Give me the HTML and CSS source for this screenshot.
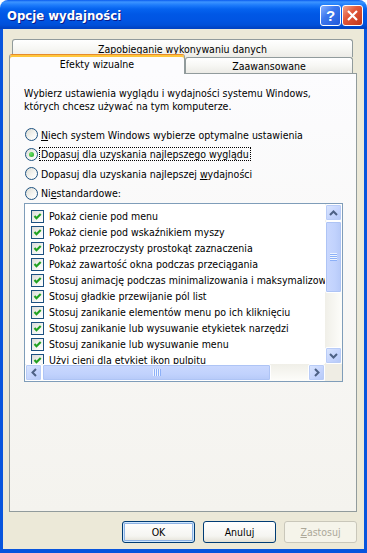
FILE: index.html
```html
<!DOCTYPE html>
<html lang="pl">
<head>
    <meta charset="UTF-8">
    <title>Opcje wydajności</title>
    <link rel="stylesheet" href="styles.css">
</head>
<body>
    <div class="window">
        <div class="titlebar">
            <span class="title">Opcje wydajności</span>
            <div class="title-buttons">
                <div class="tbtn help">?</div>
                <div class="tbtn close">
                    <svg width="11" height="11" viewBox="0 0 11 11"><path d="M1 1 L10 10 M10 1 L1 10" stroke="#fff" stroke-width="2.2" fill="none"/></svg>
                </div>
            </div>
        </div>
        <div class="frame">
            <div class="client">
                <div class="tab-row row-back">
                    <div class="tab tab-wide">Zapobieganie wykonywaniu danych</div>
                </div>
                <div class="tab-row row-front">
                    <div class="tab active">Efekty wizualne</div>
                    <div class="tab tab-adv">Zaawansowane</div>
                </div>

                <div class="panel">
                    <p class="intro">Wybierz ustawienia wyglądu i wydajności systemu Windows,<br>których chcesz używać na tym komputerze.</p>

                    <div class="options">
                        <div class="radio"><span class="rb"></span><span class="rlabel"><u>N</u>iech system Windows wybierze optymalne ustawienia</span></div>
                        <div class="radio"><span class="rb checked"></span><span class="rlabel focused">Dopasuj dla uzyskania najlepszego wyglądu</span></div>
                        <div class="radio"><span class="rb"></span><span class="rlabel">Dopasuj dla uzyskania najlepszej <u>w</u>ydajności</span></div>
                        <div class="radio"><span class="rb"></span><span class="rlabel">Ni<u>e</u>standardowe:</span></div>
                    </div>

                    <div class="listbox">
                        <div class="items">
                            <div class="item"><span class="cb"></span>Pokaż cienie pod menu</div>
                            <div class="item"><span class="cb"></span>Pokaż cienie pod wskaźnikiem myszy</div>
                            <div class="item"><span class="cb"></span>Pokaż przezroczysty prostokąt zaznaczenia</div>
                            <div class="item"><span class="cb"></span>Pokaż zawartość okna podczas przeciągania</div>
                            <div class="item"><span class="cb"></span>Stosuj animację podczas minimalizowania i maksymalizowania okien</div>
                            <div class="item"><span class="cb"></span>Stosuj gładkie przewijanie pól list</div>
                            <div class="item"><span class="cb"></span>Stosuj zanikanie elementów menu po ich kliknięciu</div>
                            <div class="item"><span class="cb"></span>Stosuj zanikanie lub wysuwanie etykietek narzędzi</div>
                            <div class="item"><span class="cb"></span>Stosuj zanikanie lub wysuwanie menu</div>
                            <div class="item"><span class="cb"></span>Użyj cieni dla etykiet ikon pulpitu</div>
                        </div>

                        <div class="vscroll">
                            <div class="sbtn">
                                <svg width="9" height="6" viewBox="0 0 9 6"><path d="M1 5 L4.5 1.5 L8 5" stroke="#4D6185" stroke-width="2" fill="none"/></svg>
                            </div>
                            <div class="thumb vthumb"><span class="grip-v"></span></div>
                            <div class="track"></div>
                            <div class="sbtn">
                                <svg width="9" height="6" viewBox="0 0 9 6"><path d="M1 1 L4.5 4.5 L8 1" stroke="#4D6185" stroke-width="2" fill="none"/></svg>
                            </div>
                        </div>

                        <div class="hscroll">
                            <div class="sbtn">
                                <svg width="6" height="9" viewBox="0 0 6 9"><path d="M5 1 L1.5 4.5 L5 8" stroke="#4D6185" stroke-width="2" fill="none"/></svg>
                            </div>
                            <div class="thumb hthumb"><span class="grip-h"></span></div>
                            <div class="track"></div>
                            <div class="sbtn">
                                <svg width="6" height="9" viewBox="0 0 6 9"><path d="M1 1 L4.5 4.5 L1 8" stroke="#4D6185" stroke-width="2" fill="none"/></svg>
                            </div>
                        </div>

                        <div class="corner"></div>
                    </div>
                </div>

                <div class="buttons">
                    <div class="btn default">OK</div>
                    <div class="btn">Anuluj</div>
                    <div class="btn disabled"><span><u>Z</u>astosuj</span></div>
                </div>
            </div>
        </div>
    </div>
</body>
</html>
```

FILE: styles.css
```css
* {
    box-sizing: border-box;
}

body {
    margin: 0;
    background: #ffffff;
    font-family: Tahoma, "DejaVu Sans Condensed", "Liberation Sans", Arial, sans-serif;
    font-size: 10.5px;
    color: #000;
}

.window {
    width: 367px;
    height: 553px;
    display: flex;
    flex-direction: column;
}

/* Luna title bar */
.titlebar {
    height: 29px;
    display: flex;
    align-items: center;
    justify-content: space-between;
    padding: 0 4px 0 7px;
    border-radius: 8px 8px 0 0;
    background: linear-gradient(to bottom, #0A5BEE 0, #3D95FF 2px, #1E7CFB 5px, #0563EF 9px, #0058E6 14px, #0055E3 20px, #0050D9 25px, #0043C4 28px);
}

.title {
    color: #fff;
    font: bold 13px "DejaVu Sans Condensed", "Liberation Sans", Arial, sans-serif;
    text-shadow: 1px 1px #0A1B8A;
    margin-top: 1px;
}

.title-buttons {
    display: flex;
    gap: 1px;
    margin-top: 2px;
}

.tbtn {
    width: 21px;
    height: 21px;
    border: 1px solid #fff;
    border-radius: 3px;
    display: flex;
    align-items: center;
    justify-content: center;
}

.help {
    background: linear-gradient(135deg, #8AB2FF 0%, #3D78EE 40%, #2158DA 100%);
    color: #fff;
    font: bold 15px "Liberation Sans", Arial, sans-serif;
}

.close {
    background: linear-gradient(135deg, #F2A58C 0%, #E2583A 40%, #C2361A 100%);
}

.frame {
    flex: 1;
    display: flex;
    border: solid #0855DD;
    border-width: 0 3px 4px;
}

.client {
    flex: 1;
    display: flex;
    flex-direction: column;
    background: #ECE9D8;
    padding: 10px 7px 6px 6px;
}

/* tabs */
.tab-row {
    display: flex;
}

.row-back {
    height: 18px;
    padding: 0 4px 0 3px;
}

.row-front {
    height: 16px;
    padding-right: 4px;
}

.tab {
    display: flex;
    align-items: center;
    justify-content: center;
    border: 1px solid #919B9C;
    border-bottom: none;
    border-radius: 3px 3px 0 0;
    background: linear-gradient(to bottom, #FFFFFF, #F7F7F4 50%, #ECEBE6);
}

.tab-wide {
    flex: 1;
}

.tab-adv {
    flex: 1;
    padding-top: 1px;
}

.tab.active {
    position: relative;
    z-index: 1;
    width: 176px;
    height: 20px;
    margin-top: -3px;
    padding-bottom: 1px;
    border-top: 1px solid #E68B2C;
    box-shadow: inset 0 2px #FFC73C;
    background: #FCFCFE;
}

.panel {
    flex: 1;
    border: 1px solid #919B9C;
    background: linear-gradient(to bottom, #FCFCFE, #F4F3EE);
    padding: 13px 12px 0 14px;
}

.intro {
    margin: 0;
    line-height: 13px;
}

.options {
    margin-top: 12px;
}

.radio {
    height: 19.5px;
    display: flex;
    align-items: center;
    padding-left: 1px;
}

.rb {
    width: 13px;
    height: 13px;
    border-radius: 50%;
    border: 1px solid #1C5180;
    background: linear-gradient(135deg, #DCDCD3, #F6F6F3 60%, #FFFFFF);
    margin-right: 2px;
    display: flex;
    align-items: center;
    justify-content: center;
}

.rb.checked::after {
    content: "";
    width: 5px;
    height: 5px;
    border-radius: 50%;
    background: radial-gradient(circle at 35% 35%, #6BE36A, #21A121);
}

.rlabel {
    padding: 0 1px;
}

.focused {
    outline: 1px dotted #000;
}

/* list with checkboxes */
.listbox {
    width: 319px;
    height: 179px;
    display: grid;
    grid-template-columns: 1fr 17px;
    grid-template-rows: 1fr 17px;
    border: 1px solid #7F9DB9;
    background: #fff;
}

.items {
    overflow: hidden;
    padding-top: 4px;
}

.item {
    height: 16px;
    display: flex;
    align-items: center;
    padding-left: 6px;
    white-space: nowrap;
}

.cb {
    flex: none;
    width: 13px;
    height: 13px;
    margin-right: 5px;
    border: 1px solid #1C5180;
    background-image: url("data:image/svg+xml,%3Csvg xmlns='http://www.w3.org/2000/svg' width='11' height='11'%3E%3Cpath d='M2.5 5 L4.5 7.3 L8.7 3' stroke='%2321A121' stroke-width='2.1' fill='none'/%3E%3C/svg%3E"), linear-gradient(135deg, #DCDCD7, #F4F4F1 60%, #FFFFFF);
}

.vscroll {
    display: flex;
    flex-direction: column;
    background: linear-gradient(to right, #F0EFE8, #FDFDFA);
}

.hscroll {
    display: flex;
    background: linear-gradient(to bottom, #F0EFE8, #FDFDFA);
}

.sbtn {
    flex: none;
    width: 17px;
    height: 17px;
    display: flex;
    align-items: center;
    justify-content: center;
    border: 1px solid #fff;
    border-radius: 2px;
    background: linear-gradient(135deg, #DCE7FE, #C3D3FD 60%, #B4C8F6);
    box-shadow: inset 0 0 0 1px #B9CCF7;
}

.thumb {
    flex: none;
    display: flex;
    align-items: center;
    justify-content: center;
    border: 1px solid #fff;
    border-radius: 2px;
    box-shadow: inset 0 0 0 1px #AEC4F5;
}

.vthumb {
    height: 72px;
    background: linear-gradient(to right, #CAD8FE, #C1D2FD 60%, #B6C9F8);
}

.hthumb {
    width: 229px;
    background: linear-gradient(to bottom, #CAD8FE, #C1D2FD 60%, #B6C9F8);
}

.track {
    flex: 1;
}

.grip-v {
    width: 7px;
    height: 8px;
    background: repeating-linear-gradient(to bottom, #EEF4FE 0, #EEF4FE 1px, #8CB0F8 1px, #8CB0F8 2px);
}

.grip-h {
    width: 8px;
    height: 7px;
    background: repeating-linear-gradient(to right, #EEF4FE 0, #EEF4FE 1px, #8CB0F8 1px, #8CB0F8 2px);
}

.corner {
    background: #EFEDE4;
}

/* dialog buttons */
.buttons {
    display: flex;
    justify-content: flex-end;
    gap: 8px;
    margin-top: 9px;
}

.btn {
    width: 73px;
    height: 22px;
    display: flex;
    align-items: center;
    justify-content: center;
    border: 1px solid #003C74;
    border-radius: 3px;
    background: linear-gradient(to bottom, #FFFFFF, #F5F5F1 70%, #E3E0D5);
}

.btn.default {
    box-shadow: inset 0 0 0 1px #CEE7FF, inset 0 0 0 2px #8DB2E3;
}

.btn.disabled {
    border-color: #C9C7BA;
    background: #F5F4EA;
    color: #ACA899;
}
```
